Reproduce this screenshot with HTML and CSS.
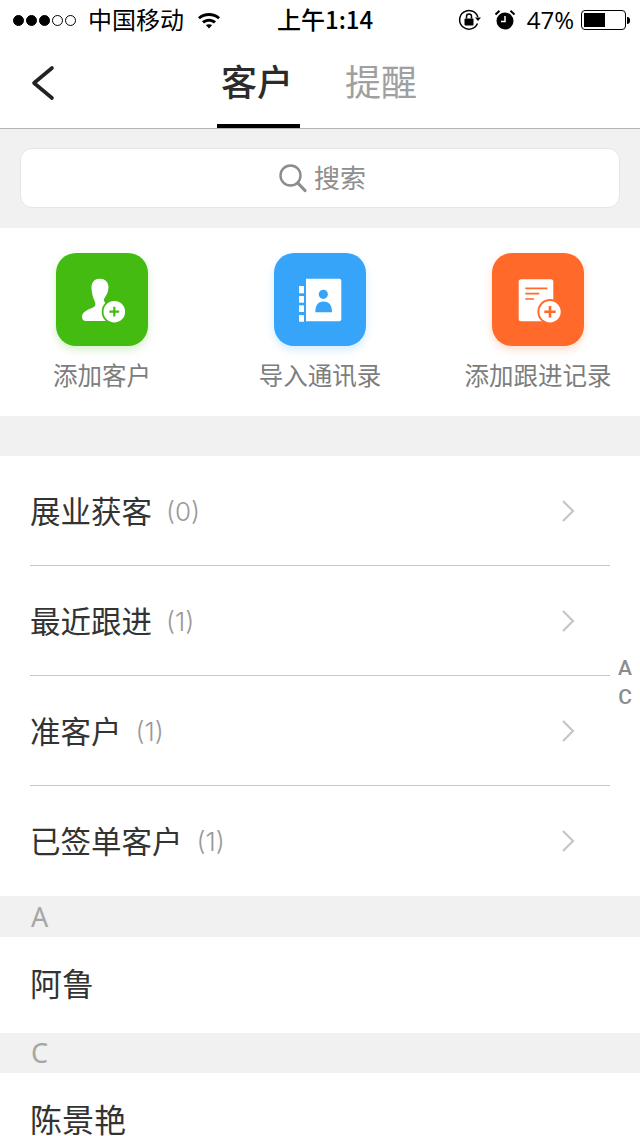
FILE: index.html
```html
<!DOCTYPE html>
<html lang="zh-CN">
<head>
<meta charset="utf-8">
<title>客户</title>
<link rel="stylesheet" href="styles.css">
</head>
<body>
<div class="page">
  <div class="status">
    <div class="status-left">
      <span class="dots"><i class="dot on"></i><i class="dot on"></i><i class="dot on"></i><i class="dot"></i><i class="dot"></i></span>
      <span class="carrier">中国移动</span>
      <svg class="wifi" width="24" height="18" viewBox="0 0 24 18"><path d="M1 6.200C7.200.7 16.800.7 23 6.200l-1.900 2.100C16 3.900 8 3.900 2.900 8.300z M5 10.300c4-3.400 10-3.400 14 0l-2 2.100c-2.900-2.300-7.100-2.300-10 0z M8.800 14.100c1.900-1.300 4.500-1.300 6.400 0L12 17.500z" fill="#000"/></svg>
    </div>
    <div class="time">上午1:14</div>
    <div class="status-right">
      <svg class="lock" width="24" height="22" viewBox="0 0 24 22"><path d="M19.500 14.500A9.300 9.300 0 1 1 19.800 8" fill="none" stroke="#000" stroke-width="1.500"/><path d="M17 8.500h6l-3 3.500z" fill="#000"/><rect x="6.500" y="9.500" width="9" height="7" rx="1" fill="#000"/><path d="M8.500 9.500V7.500a2.500 2.500 0 0 1 5 0v2" fill="none" stroke="#000" stroke-width="1.500"/></svg>
      <svg class="alarm" width="22" height="22" viewBox="0 0 22 22"><circle cx="11" cy="12" r="8.500" fill="#000"/><path d="M11 7v5.500H7" fill="none" stroke="#fff" stroke-width="1.500"/><path d="M1.500 5.500 5.500 1.800M20.500 5.500 16.500 1.800" stroke="#000" stroke-width="2" fill="none"/></svg>
      <span class="percent">47%</span>
      <span class="battery"><span class="battery-level"></span></span>
      <span class="battery-tip"></span>
    </div>
  </div>

  <div class="nav">
    <svg class="back" width="26" height="36" viewBox="0 0 26 36"><path d="M23 3 5 18l18 15" fill="none" stroke="#222" stroke-width="3.600" stroke-linecap="round" stroke-linejoin="round"/></svg>
    <div class="tabs">
      <div class="tab active">客户</div>
      <div class="tab">提醒</div>
    </div>
  </div>

  <div class="search-wrap">
    <div class="search">
      <svg width="30" height="30" viewBox="0 0 30 30"><circle cx="12.500" cy="12.500" r="10" fill="none" stroke="#8c8c8c" stroke-width="2.400"/><path d="M19.800 20 27 27.500" stroke="#8c8c8c" stroke-width="3.200" stroke-linecap="round"/></svg>
      <span class="search-text">搜索</span>
    </div>
  </div>

  <div class="actions">
    <div class="action">
      <div class="tile green">
        <svg class="icon-person" width="44" height="46" viewBox="0 0 44 46"><path d="M17.500.7C23 .7 26.500 4 26.500 9 26.500 14 24 18 22.500 20 21.500 22 22 24.500 25 26V43H4C1 43 0 41 0 39 0 34 5 32 10 30 13 29 14 27 13 24 11 20 9.500 15 9.500 9.500 9.500 4 13 .7 17.500.7Z" fill="#fff"/><circle cx="32.300" cy="33.700" r="12.600" fill="#44bb11"/><circle cx="32.300" cy="33.700" r="10.800" fill="#fff"/><path d="M32.300 28.800v9.800M27.400 33.700h9.800" stroke="#44bb11" stroke-width="2.200"/></svg>
      </div>
      <div class="label">添加客户</div>
    </div>
    <div class="action">
      <div class="tile blue">
        <svg width="46" height="44" viewBox="0 0 46 44"><rect x="2" y="8" width="5" height="7.300" fill="#fff"/><rect x="2" y="18" width="5" height="6.700" fill="#fff"/><rect x="2" y="27.300" width="5" height="6.700" fill="#fff"/><rect x="2" y="37" width="5" height="6.700" fill="#fff"/><path d="M9 .7H42.300a2 2 0 0 1 2 2V41.300a2 2 0 0 1-2 2H9z" fill="#fff"/><circle cx="26.300" cy="16.300" r="4.600" fill="#36a4f9"/><path d="M18.300 34.300C18.300 27 21 23.500 26.600 23.500S35 27 35 34.300z" fill="#36a4f9"/></svg>
      </div>
      <div class="label">导入通讯录</div>
    </div>
    <div class="action">
      <div class="tile orange">
        <svg class="icon-doc" width="46" height="46" viewBox="0 0 46 46"><rect x=".7" y="1.300" width="34.600" height="42" rx="2.500" fill="#fff"/><path d="M7.300 10.300h22M7.300 15.700h14M7.300 21h8.700" stroke="#ff6a2a" stroke-width="1.700"/><circle cx="32" cy="33.700" r="12.600" fill="#ff6a2a"/><circle cx="32" cy="33.700" r="10.700" fill="#fff"/><path d="M32 28v11.400M26.300 33.700h11.400" stroke="#ff6a2a" stroke-width="2.600"/></svg>
      </div>
      <div class="label">添加跟进记录</div>
    </div>
  </div>

  <div class="spacer"></div>

  <div class="groups">
    <div class="row"><span class="name">展业获客</span><span class="count">(0)</span><svg class="chev" width="14" height="24" viewBox="0 0 14 24"><path d="M2 2 12 12 2 22" fill="none" stroke="#c6c6c6" stroke-width="2.200"/></svg></div>
    <div class="row"><span class="name">最近跟进</span><span class="count">(1)</span><svg class="chev" width="14" height="24" viewBox="0 0 14 24"><path d="M2 2 12 12 2 22" fill="none" stroke="#c6c6c6" stroke-width="2.200"/></svg></div>
    <div class="row"><span class="name">准客户</span><span class="count">(1)</span><svg class="chev" width="14" height="24" viewBox="0 0 14 24"><path d="M2 2 12 12 2 22" fill="none" stroke="#c6c6c6" stroke-width="2.200"/></svg></div>
    <div class="row last"><span class="name">已签单客户</span><span class="count">(1)</span><svg class="chev" width="14" height="24" viewBox="0 0 14 24"><path d="M2 2 12 12 2 22" fill="none" stroke="#c6c6c6" stroke-width="2.200"/></svg></div>
  </div>

  <div class="letter">A</div>
  <div class="contact">阿鲁</div>
  <div class="letter short">C</div>
  <div class="contact">陈景艳</div>

  <div class="index"><span>A</span><span>C</span></div>
</div>
</body>
</html>
```
FILE: styles.css
```css
* { box-sizing: border-box; }
html, body { margin: 0; padding: 0; background: #fff; }
body { font-family: "Noto Sans CJK SC", "Noto Sans", sans-serif; }
.page { position: relative; width: 640px; height: 1136px; overflow: hidden; background: #fff; color: #2b2b2b; }

.status { height: 40px; position: relative; display: flex; align-items: center; justify-content: space-between; padding: 0 10px 0 13px; color: #000; font-size: 24px; }
.status-left { display: flex; align-items: center; }
.dots { display: flex; gap: 2px; margin-right: 12px; }
.dot { width: 11px; height: 11px; border-radius: 50%; border: 1px solid #000; }
.dot.on { background: #000; }
.carrier { line-height: 38px; height: 40px; }
.wifi { margin-left: 13px; }
.time { position: absolute; left: 277px; top: 0; line-height: 38px; font-weight: 500; }
.status-right { display: flex; align-items: center; }
.lock { margin-right: 12px; }
.alarm { margin-right: 11px; }
.percent { font-family: "Open Sans", "Noto Sans", sans-serif; line-height: 40px; margin-right: 7px; }
.battery { width: 45px; height: 20px; border: 1px solid #000; border-radius: 4px; padding: 2px; display: block; }
.battery-level { display: block; width: 21px; height: 100%; background: #000; }
.battery-tip { width: 3px; height: 7px; background: #000; border-radius: 0 3px 3px 0; margin-left: 1px; }

.nav { height: 89px; position: relative; display: flex; justify-content: center; border-bottom: 1px solid #b4b4b4; }
.back { position: absolute; left: 29px; top: 25px; }
.tabs { display: flex; gap: 54px; padding-right: 2px; }
.tab { font-size: 36px; line-height: 81px; height: 88px; width: 70px; text-align: center; color: #a0a0a0; position: relative; white-space: nowrap; display: flex; justify-content: center; }
.tab.active { color: #2b2b2b; font-weight: 500; }
.tab.active::after { content: ""; position: absolute; left: -5px; right: -8px; bottom: 0; height: 4px; background: #000; }

.search-wrap { height: 99px; background: #f1f1f1; padding: 19px 20px 20px; }
.search { height: 60px; background: #fff; border: 1px solid #e6e6e6; border-radius: 12px; display: flex; align-items: center; justify-content: center; gap: 6px; padding-left: 4px; color: #8e8e8e; font-size: 26px; }
.search-text { margin-bottom: 4px; }

.actions { height: 188px; display: flex; justify-content: space-between; padding: 25px 28px 0 28px; }
.action { width: 148px; display: flex; flex-direction: column; align-items: center; }
.tile { width: 92px; height: 93px; border-radius: 20px; display: flex; align-items: center; justify-content: center; }
.icon-person { margin-left: 4px; margin-top: 2px; }
.icon-doc { margin-left: 6px; margin-top: 2px; }
.green { background: #44bb11; box-shadow: 0 4px 8px rgba(68, 187, 17, .22); }
.blue { background: #36a4f9; box-shadow: 0 4px 8px rgba(54, 164, 249, .22); }
.orange { background: #ff6a2a; box-shadow: 0 4px 8px rgba(255, 106, 42, .22); }
.label { margin-top: 12px; font-size: 24.500px; line-height: 34px; color: #7d7d7d; white-space: nowrap; }

.spacer { height: 40px; background: #f1f1f1; }

.row { height: 110px; margin: 0 30px; display: flex; align-items: center; border-bottom: 1px solid #c8c8c8; padding-bottom: 2px; }
.row.last { border-bottom: 0; }
.name { font-size: 30.500px; color: #333; }
.count { margin-left: 14px; font-size: 26px; color: #9a9a9a; font-family: Inter, sans-serif; font-weight: 300; margin-top: 3px; }
.chev { margin-left: auto; margin-right: 35px; margin-top: 2px; }

.letter { height: 41px; padding-left: 31px; background: #f1f1f1; color: #a6a6a6; font-size: 27px; line-height: 41px; font-family: "Noto Sans", sans-serif; }
.letter.short { height: 40px; line-height: 40px; }
.contact { height: 96px; padding-left: 30px; font-size: 32px; line-height: 90px; color: #333; white-space: nowrap; }

.index { position: absolute; right: 8px; top: 654px; display: flex; flex-direction: column; align-items: center; font-family: Roboto, "Liberation Sans", sans-serif; font-weight: 500; font-size: 21px; line-height: 29px; color: #8c8c8c; }
```
